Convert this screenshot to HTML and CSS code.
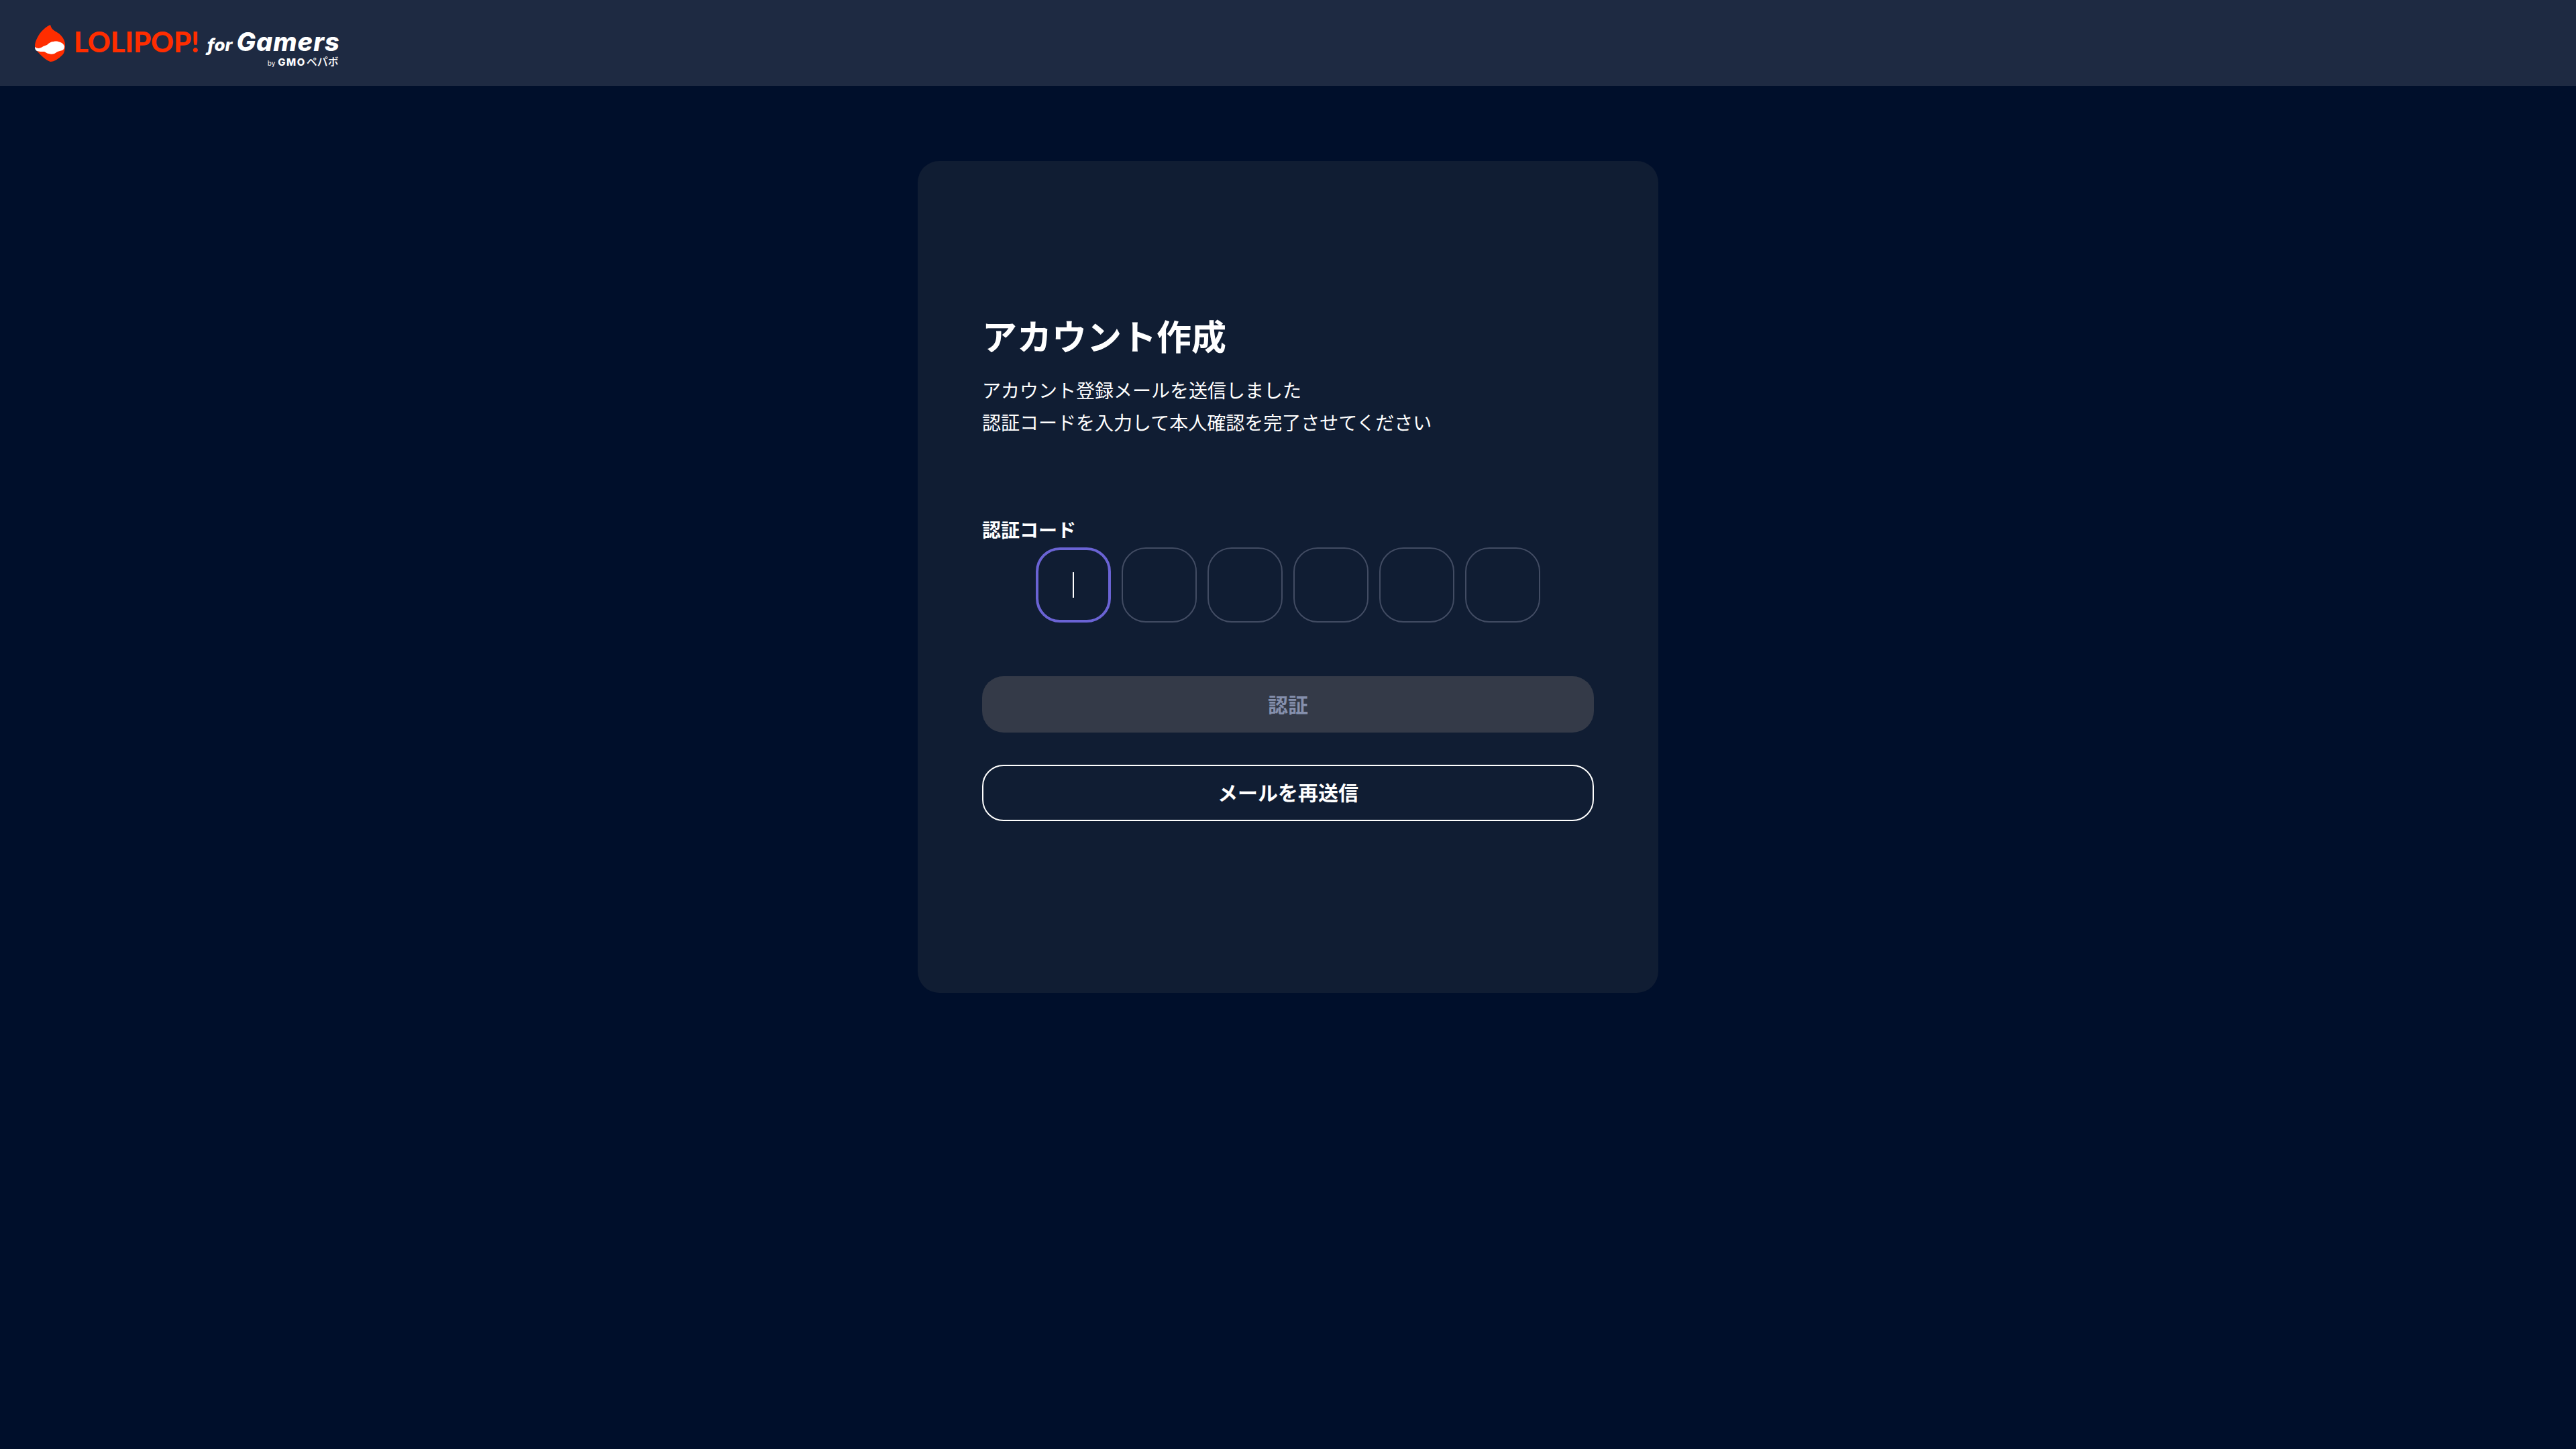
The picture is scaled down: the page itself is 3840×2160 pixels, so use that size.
FILE: index.html
```html
<!DOCTYPE html>
<html lang="ja">
<head>
    <meta charset="UTF-8">
    <meta name="viewport" content="width=device-width, initial-scale=1.0">
    <title>アカウント作成</title>
    <link rel="stylesheet" href="styles.css">
</head>
<body>
    <header class="site-header">
        <div class="logo">
            <svg class="logo-mark" viewBox="0 0 46 55" aria-hidden="true">
                <path fill="#ff2d00" d="M23 0C24 3 25 6 28 8C32 11 36 12 39 16C43 20 45 25 45 30C45 37 44 42 41 45C36 50 29 55 23 55C17 53 9 46 4 40C1 37 0 35 0 32C0 26 3 20 6 15C10 9 16 3 23 0Z"/>
                <path fill="#fff" d="M0 33C4 36 8 35 11 33C14 31 16 31 18 30C21 27 24 25 28 25C32 24 35 25 38 26C41 27 43 29 44 32C44 35 43 37 41 38C38 39 36 39 34 40C32 41 31 42 29 43C26 44 23 44 21 43C18 43 17 41 14 40C10 40 6 40 3 39C1 38 0 36 0 33Z"/>
            </svg>
            <span class="logo-name">LOLIPOP!</span>
            <div class="logo-sub">
                <div class="logo-for"><span class="for-word">for</span><span class="gamers-word">Gamers</span></div>
                <div class="logo-by"><span class="by-word">by</span><span class="gmo-word">GMO</span><span class="pepabo-word">ペパボ</span></div>
            </div>
        </div>
    </header>

    <main class="page">
        <section class="card">
            <h1 class="card-title">アカウント作成</h1>
            <p class="card-lead">アカウント登録メールを送信しました<br>認証コードを入力して本人確認を完了させてください</p>

            <div class="code-label">認証コード</div>
            <div class="code-row">
                <div class="code-box focused"><span class="caret"></span></div>
                <div class="code-box"></div>
                <div class="code-box"></div>
                <div class="code-box"></div>
                <div class="code-box"></div>
                <div class="code-box"></div>
            </div>

            <button type="button" class="btn btn-disabled">認証</button>
            <button type="button" class="btn btn-outline">メールを再送信</button>
        </section>
    </main>
</body>
</html>
```

FILE: styles.css
```css
* {
    box-sizing: border-box;
}
body {
    margin: 0;
    min-height: 2160px;
    background-color: #000f2b;
    color: #fff;
    font-family: "Inter", "Noto Sans CJK JP", sans-serif;
}
.site-header {
    display: flex;
    align-items: center;
    height: 128px;
    padding-left: 52px;
    background-color: #1e2a42;
}
.logo {
    display: flex;
    align-items: flex-start;
    height: 55px;
}
.logo-mark {
    width: 46px;
    height: 55px;
    flex-shrink: 0;
}
.logo-name {
    margin-left: 12px;
    margin-top: 4px;
    color: #ff2d00;
    font-family: "Lato", sans-serif;
    font-size: 42px;
    line-height: 42px;
    font-weight: 900;
    letter-spacing: -0.2px;
}
.logo-sub {
    display: flex;
    flex-direction: column;
    align-items: flex-end;
    margin-left: 12px;
    margin-top: 6px;
}
.logo-for {
    display: flex;
    align-items: baseline;
    height: 38px;
    font-style: italic;
    font-weight: 800;
    line-height: 38px;
}
.for-word {
    font-size: 26px;
    margin-right: 6px;
}
.gamers-word {
    font-size: 38px;
    letter-spacing: 1px;
}
.logo-by {
    display: flex;
    align-items: baseline;
    margin-top: 5px;
    padding-right: 2px;
    line-height: 12px;
}
.by-word {
    font-size: 10px;
    margin-right: 4px;
}
.gmo-word {
    font-size: 15px;
    font-weight: 800;
    letter-spacing: 1.5px;
}
.pepabo-word {
    margin-left: 1px;
    font-size: 16px;
    font-weight: 500;
}
.page {
    display: flex;
    justify-content: center;
    padding-top: 112px;
}
.card {
    width: 1104px;
    height: 1240px;
    padding: 224px 96px 0;
    background-color: #101d33;
    border-radius: 32px;
}
.card-title {
    margin: 0 0 15px;
    font-size: 52px;
    line-height: 80px;
    font-weight: 700;
}
.card-lead {
    margin: 0 0 112px;
    font-size: 28px;
    line-height: 48px;
}
.code-label {
    font-size: 28px;
    line-height: 49px;
    font-weight: 700;
}
.code-row {
    display: flex;
    justify-content: center;
    gap: 16px;
    margin-bottom: 80px;
}
.code-box {
    display: flex;
    align-items: center;
    justify-content: center;
    width: 112px;
    height: 112px;
    border: 2px solid #424c63;
    border-radius: 36px;
}
.code-box.focused {
    border: 4px solid #6a63d4;
}
.caret {
    width: 2px;
    height: 38px;
    background-color: #fff;
}
.btn {
    display: block;
    width: 100%;
    height: 84px;
    padding: 0 0 3px;
    border-radius: 32px;
    font-family: inherit;
    font-size: 30px;
    font-weight: 700;
    cursor: pointer;
}
.btn-disabled {
    margin-bottom: 48px;
    border: none;
    background-color: #343a48;
    color: #8590ad;
}
.btn-outline {
    padding-bottom: 5px;
    border: 2px solid #fff;
    background: transparent;
    color: #fff;
}
```
